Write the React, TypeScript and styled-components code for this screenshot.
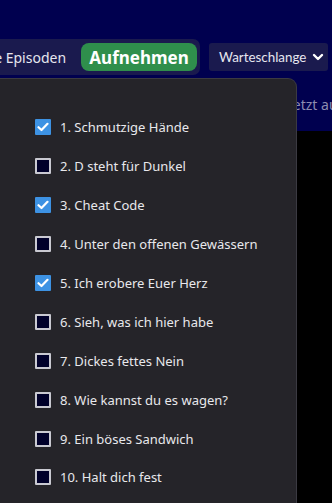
import React from 'react';
import styled, { createGlobalStyle } from 'styled-components';

const GlobalStyle = createGlobalStyle`
  html, body {
    margin: 0;
    padding: 0;
    background: #000;
    overflow: hidden;
  }
  body {
    font-family: "Noto Sans", "Open Sans", sans-serif;
  }
`;

const Page = styled.div`
  position: relative;
  width: 332px;
  height: 503px;
  overflow: hidden;
  background: #000;
`;

const Header = styled.div`
  height: 131px;
  background: #00004f;
  padding-top: 39px;
  box-sizing: border-box;
`;

const Toolbar = styled.div`
  display: flex;
  align-items: center;
  gap: 9px;
  margin-left: -34px;
`;

const Pill = styled.div`
  display: flex;
  align-items: center;
  gap: 15px;
  height: 36px;
  padding: 0 3px 0 12px;
  background: #1a1a4e;
  border-radius: 7px;
`;

const PillLabel = styled.span`
  color: #e6e6ee;
  font-size: 14px;
  white-space: nowrap;
`;

const RecordButton = styled.button`
  height: 28px;
  width: 116px;
  border: none;
  border-radius: 8px;
  background: #2f8f4c;
  color: #fff;
  font-family: "Noto Sans", sans-serif;
  font-weight: 700;
  font-size: 17px;
  padding: 0;
`;

const QueueSelect = styled.div`
  display: flex;
  align-items: center;
  justify-content: space-between;
  width: 119px;
  height: 28px;
  padding: 0 4px 0 10px;
  box-sizing: border-box;
  background: #1a1a4e;
  border-radius: 3px;
  color: #e6e6ee;
  font-family: "Lato", "Noto Sans", sans-serif;
  font-size: 13.4px;
  white-space: nowrap;
`;

const Status = styled.div`
  margin-top: 20px;
  padding-left: 289px;
  color: #8c8cb0;
  font-size: 14px;
  white-space: nowrap;
`;

const Menu = styled.div`
  position: absolute;
  left: 0;
  top: 78px;
  width: 297px;
  height: 460px;
  box-sizing: border-box;
  background: #252429;
  border: 1px solid #3b3a42;
  border-left: none;
  border-radius: 0 9px 0 0;
  padding: 29px 0 0 35px;
  display: flex;
  flex-direction: column;
`;

const Item = styled.label`
  display: flex;
  align-items: center;
  gap: 9px;
  height: 38.9px;
  flex-shrink: 0;
  color: #e8e8ec;
  font-size: 13px;
  white-space: nowrap;
`;

const Box = styled.span<{ $checked: boolean }>`
  width: 16px;
  height: 16px;
  box-sizing: border-box;
  border-radius: 1px;
  display: flex;
  align-items: center;
  justify-content: center;
  background: ${(p) => (p.$checked ? '#3d92e3' : '#00002a')};
  border: ${(p) => (p.$checked ? 'none' : '2px solid #c9c9d1')};
`;

const episodes: [string, boolean][] = [
  ['1. Schmutzige Hände', true],
  ['2. D steht für Dunkel', false],
  ['3. Cheat Code', true],
  ['4. Unter den offenen Gewässern', false],
  ['5. Ich erobere Euer Herz', true],
  ['6. Sieh, was ich hier habe', false],
  ['7. Dickes fettes Nein', false],
  ['8. Wie kannst du es wagen?', false],
  ['9. Ein böses Sandwich', false],
  ['10. Halt dich fest', false],
];

const Check = () => (
  <svg width="12" height="10" viewBox="0 0 12 10">
    <path d="M1.5 5.2 L4.5 8 L10.5 1.8" fill="none" stroke="#fff" strokeWidth="2.2" strokeLinecap="round" strokeLinejoin="round" />
  </svg>
);

const Chevron = () => (
  <svg width="12" height="10" viewBox="0 0 12 10">
    <path d="M2 3 L6 7 L10 3" fill="none" stroke="#fff" strokeWidth="2.4" strokeLinecap="round" strokeLinejoin="round" />
  </svg>
);

export default function App() {
  return (
    <Page>
      <GlobalStyle />
      <Header>
        <Toolbar>
          <Pill>
            <PillLabel>Alle Episoden</PillLabel>
            <RecordButton>Aufnehmen</RecordButton>
          </Pill>
          <QueueSelect>
            Warteschlange
            <Chevron />
          </QueueSelect>
        </Toolbar>
        <Status>Jetzt aufnehmen</Status>
      </Header>
      <Menu>
        {episodes.map(([title, checked]) => (
          <Item key={title}>
            <Box $checked={checked}>{checked && <Check />}</Box>
            {title}
          </Item>
        ))}
      </Menu>
    </Page>
  );
}
